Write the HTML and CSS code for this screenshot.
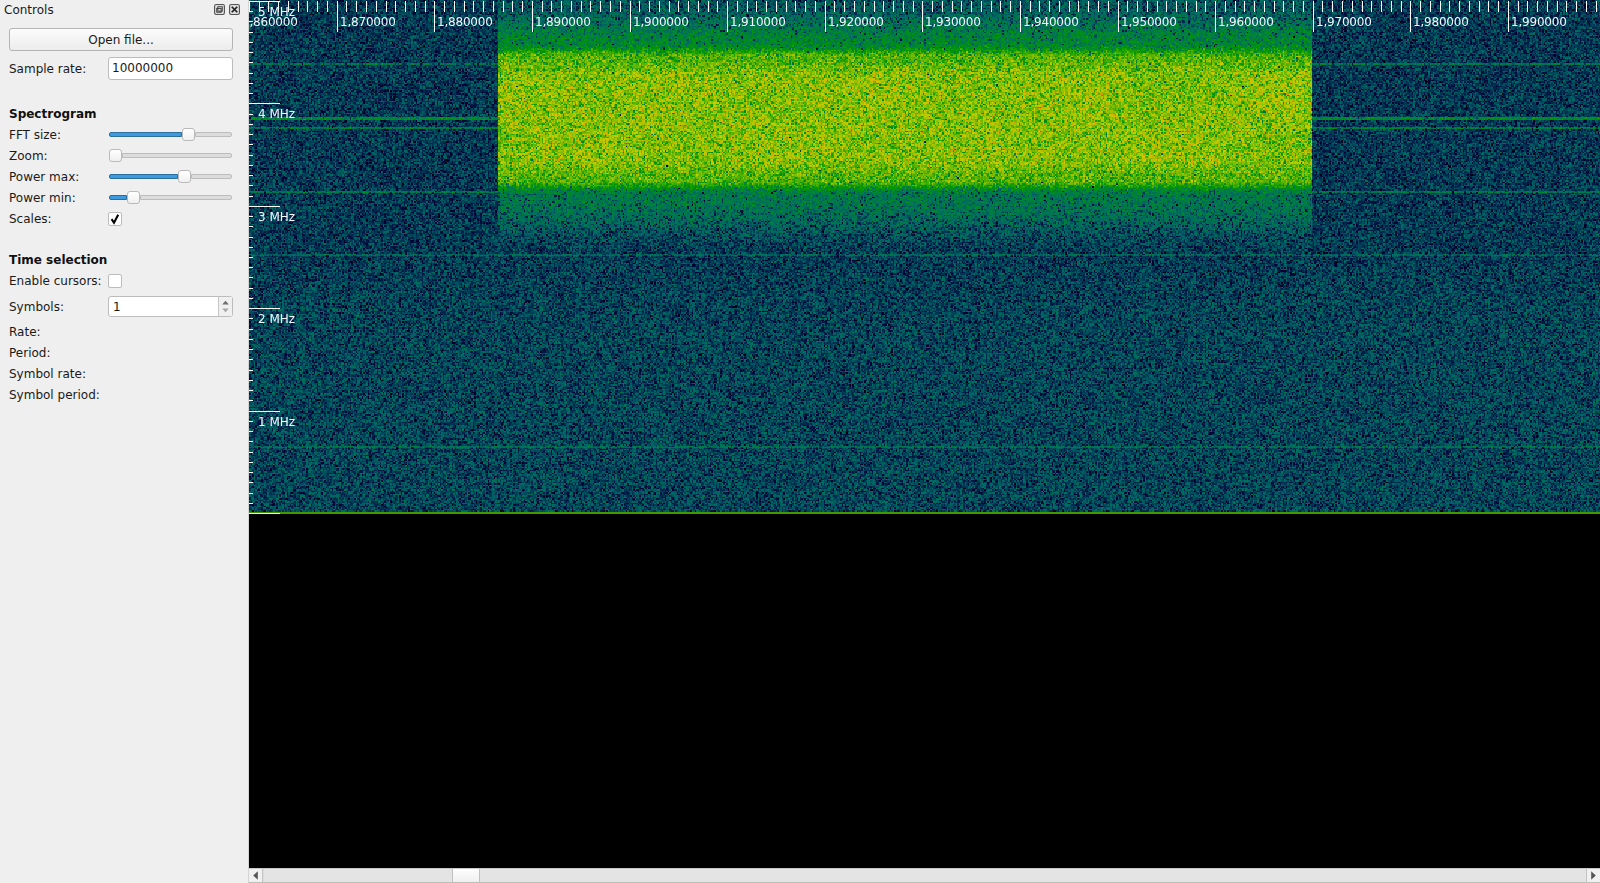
FILE: index.html
```html
<!DOCTYPE html>
<html lang="en">
<head>
    <meta charset="UTF-8">
    <title>inspectrum</title>
    <link rel="stylesheet" href="styles.css">
</head>
<body>
    <aside class="dock">
        <div class="dock-title">
            <span>Controls</span>
            <div class="dock-buttons">
                <svg class="dock-icon" viewBox="0 0 10 10"><rect x="0.5" y="0.5" width="9" height="9" rx="1.5" class="icon-box"/><rect x="3.5" y="2.5" width="4" height="4" class="icon-line"/><rect x="2.5" y="4" width="4" height="3.5" class="icon-line"/></svg>
                <svg class="dock-icon" viewBox="0 0 10 10"><rect x="0.5" y="0.5" width="9" height="9" rx="1.5" class="icon-box"/><path d="M2.5 2.5l5 5M7.5 2.5l-5 5" class="icon-cross"/></svg>
            </div>
        </div>

        <div class="form">
            <button class="btn">Open file...</button>
            <div class="row row-input">
                <label>Sample rate:</label>
                <div class="field">10000000</div>
            </div>

            <h2 class="section">Spectrogram</h2>
            <div class="row">
                <label>FFT size:</label>
                <div class="slider"><div class="fill" style="width: 73px"></div><div class="handle"></div><div class="rest"></div></div>
            </div>
            <div class="row">
                <label>Zoom:</label>
                <div class="slider"><div class="handle"></div><div class="rest"></div></div>
            </div>
            <div class="row">
                <label>Power max:</label>
                <div class="slider"><div class="fill" style="width: 69px"></div><div class="handle"></div><div class="rest"></div></div>
            </div>
            <div class="row">
                <label>Power min:</label>
                <div class="slider"><div class="fill" style="width: 18px"></div><div class="handle"></div><div class="rest"></div></div>
            </div>
            <div class="row">
                <label>Scales:</label>
                <div class="check"><svg viewBox="0 0 12 12"><path d="M2.6 6.2l2.4 3.6 4.2-8" class="tick"/></svg></div>
            </div>

            <h2 class="section section-time">Time selection</h2>
            <div class="row">
                <label>Enable cursors:</label>
                <div class="check"></div>
            </div>
            <div class="row row-spin">
                <label>Symbols:</label>
                <div class="spin">
                    <span class="spin-value">1</span>
                    <div class="spin-arrows">
                        <svg viewBox="0 0 13 20"><path d="M6.5 4l3.5 4h-7z" class="arrow"/><path d="M6.5 16l3.5-4h-7z" class="arrow arrow-off"/></svg>
                    </div>
                </div>
            </div>
            <div class="row"><label>Rate:</label></div>
            <div class="row"><label>Period:</label></div>
            <div class="row"><label>Symbol rate:</label></div>
            <div class="row"><label>Symbol period:</label></div>
        </div>
    </aside>

    <main class="view">
        <div class="plot" id="plot">
            <canvas id="spectrogram" width="1351" height="514"></canvas>
        </div>
        <div class="blank"></div>
        <div class="scrollbar">
            <div class="scroll-btn"><svg viewBox="0 0 13 14"><path d="M4 7l5-4.5v9z" class="arrow-dark"/></svg></div>
            <div class="track track-left"></div>
            <div class="thumb"></div>
            <div class="track"></div>
            <div class="scroll-btn scroll-btn-right"><svg viewBox="0 0 13 14"><path d="M9 7l-5-4.5v9z" class="arrow-dark"/></svg></div>
        </div>
    </main>

    <script src="script.js"></script>
</body>
</html>
```

FILE: styles.css
```css
/* Qt Fusion look */
html, body {
    height: 100%;
}
body {
    margin: 0;
    display: flex;
    background-color: #000;
    color: #1a1a1a;
    font-family: "DejaVu Sans", sans-serif;
    font-size: 12px;
    overflow: hidden;
}

/* Left dock */
.dock {
    width: 248px;
    flex: none;
    background-color: #efefef;
    border-right: 1px solid #d4d4d4;
}
.dock-title {
    height: 19px;
    padding: 0 8px 0 4px;
    display: flex;
    justify-content: space-between;
    align-items: center;
}
.dock-buttons {
    display: flex;
    gap: 4px;
}
.dock-icon {
    width: 11px;
    height: 11px;
    display: block;
}
.icon-box {
    fill: #dcdcdc;
    stroke: #555;
    stroke-width: 1;
}
.icon-line {
    fill: none;
    stroke: #333;
    stroke-width: 0.8;
}
.icon-cross {
    fill: none;
    stroke: #222;
    stroke-width: 1.6;
}

.form {
    padding: 9px 15px 0 9px;
    display: flex;
    flex-direction: column;
}
.btn {
    height: 23px;
    padding: 0;
    border: 1px solid #b4b4b4;
    border-radius: 3px;
    background: linear-gradient(#fcfcfc, #ececec);
    color: #1a1a1a;
    font: inherit;
}
.row {
    height: 21px;
    display: flex;
    align-items: center;
}
.row label {
    width: 99px;
    flex: none;
    white-space: nowrap;
}
.row-input {
    height: 23px;
    margin-top: 6px;
}
.field {
    flex: 1;
    height: 23px;
    box-sizing: border-box;
    padding-left: 3px;
    line-height: 21px;
    background-color: #fff;
    border: 1px solid #bcbcbc;
    border-radius: 3px;
}
.section {
    height: 20px;
    margin: 24px 0 0;
    font-size: 12px;
    line-height: 20px;
    font-weight: bold;
    color: #111;
}
.section-time {
    margin-top: 21px;
}

/* Sliders */
.slider {
    flex: 1;
    margin: 0 1px 0 1px;
    display: flex;
    align-items: center;
}
.fill {
    height: 5px;
    box-sizing: border-box;
    background-color: #3d9ade;
    border: 1px solid #2b6f9f;
    border-radius: 2px 0 0 2px;
}
.rest {
    flex: 1;
    height: 5px;
    box-sizing: border-box;
    background-color: #dcdcdc;
    border: 1px solid #bdbdbd;
    border-radius: 0 2px 2px 0;
}
.handle {
    width: 13px;
    height: 13px;
    flex: none;
    box-sizing: border-box;
    background: linear-gradient(#fff, #f0f0f0);
    border: 1px solid #bababa;
    border-radius: 3px;
}

/* Checkbox and spin box */
.check {
    width: 14px;
    height: 14px;
    box-sizing: border-box;
    background-color: #fff;
    border: 1px solid #bcbcbc;
    border-radius: 2px;
}
.check svg {
    display: block;
    width: 12px;
    height: 12px;
}
.tick {
    fill: none;
    stroke: #000;
    stroke-width: 2.1;
}
.row-spin {
    height: 21px;
    margin: 5px 0 4px;
}
.spin {
    flex: 1;
    height: 21px;
    box-sizing: border-box;
    display: flex;
    background-color: #fff;
    border: 1px solid #bcbcbc;
    border-radius: 3px;
}
.spin-value {
    flex: 1;
    padding-left: 4px;
    line-height: 20px;
}
.spin-arrows {
    width: 13px;
    border-left: 1px solid #c4c4c4;
    background-color: #f0f0f0;
}
.spin-arrows svg {
    display: block;
    width: 13px;
    height: 19px;
}
.arrow {
    fill: #6f6f6f;
}
.arrow-off {
    fill: #a8a8a8;
}

/* Spectrogram view */
.view {
    flex: 1;
    min-width: 0;
    display: flex;
    flex-direction: column;
    background-color: #000;
}
.plot {
    height: 514px;
    flex: none;
    position: relative;
    overflow: hidden;
}
.plot canvas {
    display: block;
}
.axis-label {
    position: absolute;
    color: #f4f8ff;
    font-size: 12px;
    line-height: 14px;
    white-space: nowrap;
}
.axis-label-x {
    letter-spacing: -0.2px;
}
.blank {
    flex: 1;
}

/* Bottom scrollbar */
.scrollbar {
    height: 15px;
    flex: none;
    display: flex;
    box-sizing: border-box;
    background-color: #e4e4e4;
    border-top: 1px solid #c8c8c8;
    border-bottom: 1px solid #bcbcbc;
}
.scroll-btn {
    width: 13px;
    flex: none;
    background-color: #f0f0f0;
    border-right: 1px solid #c4c4c4;
}
.scroll-btn-right {
    border-right: 0;
    border-left: 1px solid #c4c4c4;
}
.scroll-btn svg {
    display: block;
    width: 13px;
    height: 13px;
}
.arrow-dark {
    fill: #555;
}
.track {
    flex: 1;
}
.track-left {
    flex: none;
    width: 188px;
    border-left: 1px solid #dcdcdc;
}
.thumb {
    width: 26px;
    flex: none;
    background: linear-gradient(#fdfdfd, #f0f0f0);
    border-left: 1px solid #c0c0c0;
    border-right: 1px solid #c0c0c0;
}
```

FILE: script.js
```js
// Draws the spectrogram noise, the ruler ticks and the axis labels
const canvas = document.getElementById('spectrogram');
const plot = document.getElementById('plot');
const ctx = canvas.getContext('2d');
const W = canvas.width;
const H = canvas.height;

const X_MAJOR = 97.6;   // px per 10000 samples
const X_START = -9.9;   // x of the 1,860000 tick inside the canvas
const Y_MAJOR = 102.4;  // px per MHz
const Y_ZERO = 513;

const BAND_LEFT = 249;  // canvas x of the signal, 498 on the page
const BAND_RIGHT = 1063;

// seeded so every run gives the same picture
let seed = 48213;
function rnd() {
    seed = (seed * 1664525 + 1013904223) >>> 0;
    return (seed >>> 8) / 16777216;
}

// inspectrum colour map: hue and value both follow p
function colour(p) {
    p = Math.min(1, Math.max(0, p));
    const h = p * 0.83 * 6;
    const v = 1 - p;
    const f = h - Math.floor(h);
    const q = v * (1 - f);
    const t = v * f;
    switch (Math.floor(h) % 6) {
        case 0: return [v, t, 0];
        case 1: return [q, v, 0];
        case 2: return [0, v, t];
        case 3: return [0, q, v];
        case 4: return [t, 0, v];
        default: return [v, 0, q];
    }
}

function smooth(a, b, x) {
    const t = Math.min(1, Math.max(0, (x - a) / (b - a)));
    return t * t * (3 - 2 * t);
}

// signal level at a canvas position, lower p is stronger
function level(x, y) {
    let bg = 0.65 - 0.02 * smooth(230, 330, y);

    // carriers
    const lines = [[64, 0.53, 1], [118, 0.44, 2], [128, 0.5, 1], [192, 0.52, 1], [255, 0.57, 1], [447, 0.54, 1]];
    for (const [ly, lp, lh] of lines) {
        if (y >= ly - 1 && y < ly - 1 + lh + 1) bg = Math.min(bg, lp);
    }

    if (x < BAND_LEFT || x >= BAND_RIGHT) return bg;

    let p;
    if (y < 44) {
        p = 0.60 - 0.14 * smooth(4, 44, y);
    } else if (y < 56) {
        p = 0.46 - 0.17 * smooth(44, 56, y);
    } else if (y < 180) {
        const mid = 1 - Math.abs(y - 118) / 62;
        p = 0.29 - 0.05 * smooth(0, 0.35, mid);
        p += 0.01 * Math.sin(x / 31) * Math.sin(y / 19);
    } else if (y < 194) {
        p = 0.29 + 0.22 * smooth(180, 194, y);
    } else {
        p = 0.51 + 0.14 * smooth(194, 256, y);
    }
    return Math.min(bg, p);
}

// one noise value per FFT cell, a cell is about 1.5 px square
const CELL = 1.5;
const img = ctx.createImageData(W, H);
const cols = Math.ceil(W / CELL) + 1;
let rowNoise = new Float32Array(cols);
let lastRow = -1;
for (let y = 0; y < H; y++) {
    const row = Math.floor(y / CELL);
    if (row !== lastRow) {
        // power of one FFT bin is exponentially distributed
        for (let c = 0; c < cols; c++) {
            rowNoise[c] = -Math.log(1 - rnd() * 0.9999);
        }
        lastRow = row;
    }
    for (let x = 0; x < W; x++) {
        const power = rowNoise[Math.floor(x / CELL)];
        const p = level(x, y) - 0.0125 * 10 * Math.log10(power);
        const [r, g, b] = colour(p);
        const i = (y * W + x) * 4;
        img.data[i] = r * 255;
        img.data[i + 1] = g * 255;
        img.data[i + 2] = b * 255;
        img.data[i + 3] = 255;
    }
}
ctx.putImageData(img, 0, 0);

// DC line at the bottom
ctx.fillStyle = '#3f9a00';
ctx.fillRect(0, 512, W, 2);

// ruler ticks
ctx.fillStyle = '#fff';
for (let i = 0; X_START + i * X_MAJOR / 10 < W; i++) {
    const x = Math.round(X_START + i * X_MAJOR / 10);
    ctx.fillRect(x, 1, 1, i % 10 === 0 ? 31 : 11);
}
for (let i = 0; i <= 50; i++) {
    const y = Math.round(Y_ZERO - i * Y_MAJOR / 10);
    ctx.fillRect(0, y, i % 10 === 0 ? 31 : 4, 1);
}

function addLabel(text, cls, left, top) {
    const el = document.createElement('span');
    el.className = cls;
    el.textContent = text;
    el.style.left = left + 'px';
    el.style.top = top + 'px';
    plot.appendChild(el);
}

for (let mhz = 1; mhz <= 5; mhz++) {
    addLabel(mhz + ' MHz', 'axis-label', 9, Math.round(Y_ZERO - mhz * Y_MAJOR) + 4);
}
for (let i = 0; i < 14; i++) {
    addLabel('1,' + (860 + i * 10) + '000', 'axis-label axis-label-x', Math.round(X_START + i * X_MAJOR) + 3, 15);
}
```
